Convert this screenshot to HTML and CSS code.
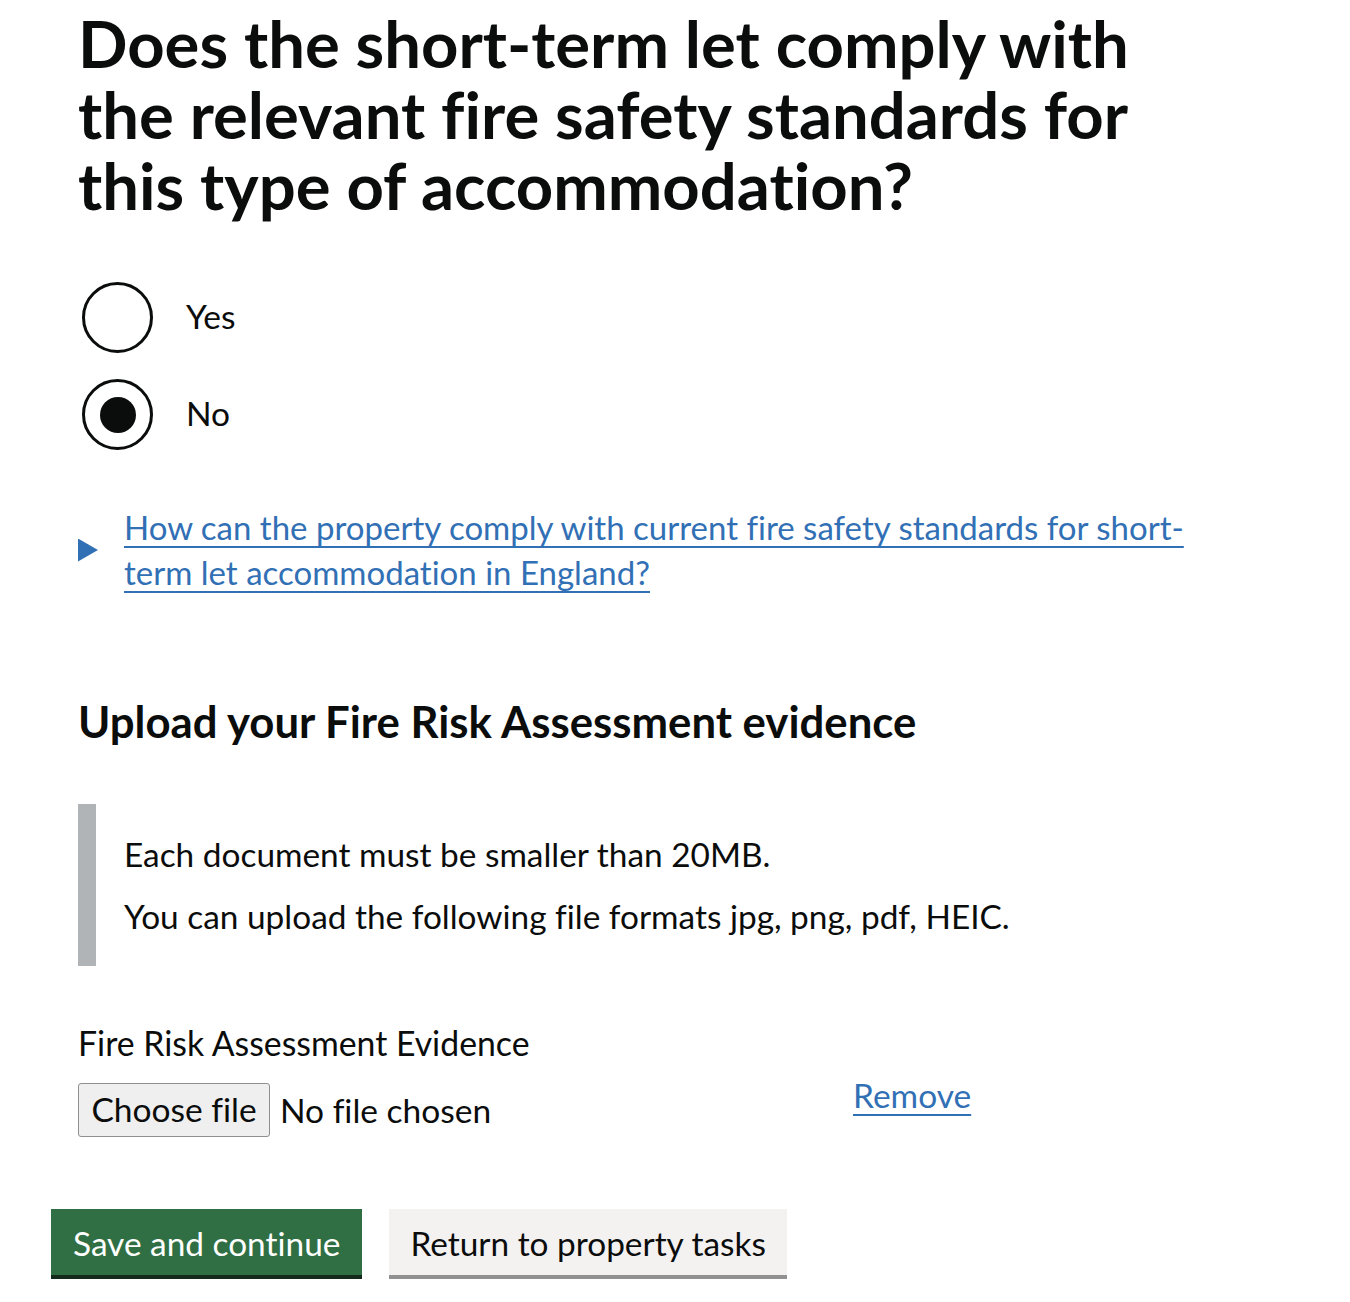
FILE: index.html
```html
<!DOCTYPE html>
<html lang="en">
<head>
<meta charset="utf-8">
<title>Fire safety</title>
<link rel="stylesheet" href="styles.css">
</head>
<body>
<main class="page">
  <div class="form">
    <h1 class="heading-xl">Does the short-term let comply with the relevant fire safety standards for this type of accommodation?</h1>
    <div class="radios">
      <label class="radio">
        <input class="radio-input" type="radio" name="comply" value="yes">
        <span class="radio-mark"></span>
        <span class="radio-label">Yes</span>
      </label>
      <label class="radio">
        <input class="radio-input" type="radio" name="comply" value="no" checked>
        <span class="radio-mark"></span>
        <span class="radio-label">No</span>
      </label>
    </div>
    <details class="details">
      <summary class="details-summary"><span class="details-arrow"></span><span class="details-text">How can the property comply with current fire safety standards for short-term let accommodation in England?</span></summary>
    </details>
    <h2 class="heading-m">Upload your Fire Risk Assessment evidence</h2>
    <div class="inset">
      <p class="body">Each document must be smaller than 20MB.</p>
      <p class="body">You can upload the following file formats jpg, png, pdf, HEIC.</p>
    </div>
    <label class="file-label" for="evidence">Fire Risk Assessment Evidence</label>
    <div class="file-row">
      <label class="file-control">
        <input class="file-input" id="evidence" type="file">
        <span class="file-button">Choose file</span>
        <span class="file-status">No file chosen</span>
      </label>
      <a class="link remove" href="#">Remove</a>
    </div>
  </div>
  <div class="actions">
    <button class="button button-primary" type="button">Save and continue</button>
    <button class="button button-secondary" type="button">Return to property tasks</button>
  </div>
</main>
</body>
</html>
```

FILE: styles.css
```css
* { box-sizing: border-box; }
body {
  margin: 0;
  background: #ffffff;
  color: #0b0c0c;
  font-family: "Lato", "Noto Sans", sans-serif;
  font-variant-ligatures: none;
}
.page {
  padding: 0 0 40px 51px;
}
.form {
  padding-left: 27px;
  width: 1160px;
}
.heading-xl {
  margin: 8px 0 0 0;
  font-size: 65.2px;
  line-height: 71px;
  font-weight: 700;
  width: 1130px;
}
.radios {
  margin-top: 61px;
  display: flex;
  flex-direction: column;
  gap: 26px;
}
.radio {
  display: flex;
  align-items: center;
  gap: 33px;
  height: 71px;
  cursor: pointer;
  margin-left: 4px;
}
.radio-input {
  position: absolute;
  opacity: 0;
  width: 0;
  height: 0;
  margin: 0;
}
.radio-mark {
  width: 71px;
  height: 71px;
  border: 3.5px solid #0b0c0c;
  border-radius: 50%;
  display: flex;
  align-items: center;
  justify-content: center;
  flex: none;
}
.radio-input:checked + .radio-mark::after {
  content: "";
  width: 36px;
  height: 36px;
  border-radius: 50%;
  background: #0b0c0c;
}
.radio-label {
  font-size: 33.5px;
  line-height: 44px;
  margin-top: -3px;
}
.details {
  margin-top: 55px;
}
.details-summary {
  display: block;
  list-style: none;
  position: relative;
  padding-left: 46px;
  cursor: pointer;
}
.details-summary::-webkit-details-marker { display: none; }
.details-arrow {
  position: absolute;
  left: 0;
  top: 0;
  bottom: 0;
  margin: auto 0;
  width: 20px;
  height: 23px;
  background: #3270b5;
  clip-path: polygon(0 0, 100% 50%, 0 100%);
}
.details-text {
  color: #3270b5;
  font-size: 33px;
  line-height: 45px;
  text-decoration: underline;
  text-decoration-thickness: 2px;
  text-underline-offset: 6px;
}
.heading-m {
  margin: 101px 0 0 0;
  font-size: 43.7px;
  line-height: 50px;
  font-weight: 700;
}
.inset {
  margin-top: 58px;
  border-left: 18px solid #b1b4b6;
  padding: 28px 0 28px 28px;
}
.body {
  margin: 0;
  font-size: 33.4px;
  line-height: 44px;
}
.body + .body {
  margin-top: 18px;
}
.file-label {
  display: block;
  margin-top: 55px;
  font-size: 33.8px;
  line-height: 44px;
}
.file-row {
  margin-top: 18px;
  display: flex;
  align-items: flex-start;
  gap: 40px;
}
.file-control {
  width: 735px;
  display: flex;
  align-items: center;
  gap: 10px;
  font-size: 33.5px;
  cursor: pointer;
}
.file-input {
  position: absolute;
  opacity: 0;
  width: 0;
  height: 0;
}
.file-button {
  height: 54px;
  width: 192px;
  display: flex;
  align-items: center;
  justify-content: center;
  background: #efefef;
  border: 1px solid #8f8f8f;
  border-radius: 3px;
  line-height: 1;
}
.file-status {
  line-height: 44px;
}
.link {
  color: #3270b5;
  text-decoration: underline;
  text-decoration-thickness: 2px;
  text-underline-offset: 6px;
}
.remove {
  font-size: 33.5px;
  line-height: 24px;
}
.actions {
  margin-top: 72px;
  display: flex;
  gap: 27px;
}
.button {
  font-family: inherit;
  font-size: 33.4px;
  line-height: 40px;
  padding: 14px 21px 12px;
  border: 0;
  border-radius: 0;
  cursor: pointer;
  height: 66px;
  margin-bottom: 4px;
  font-variant-ligatures: none;
}
.button-primary {
  background: #306f44;
  color: #ffffff;
  box-shadow: 0 4px 0 #142b1c;
  padding-left: 22px;
  padding-right: 22px;
}
.button-secondary {
  background: #f3f2f1;
  color: #0b0c0c;
  box-shadow: 0 4px 0 #929191;
}
```
